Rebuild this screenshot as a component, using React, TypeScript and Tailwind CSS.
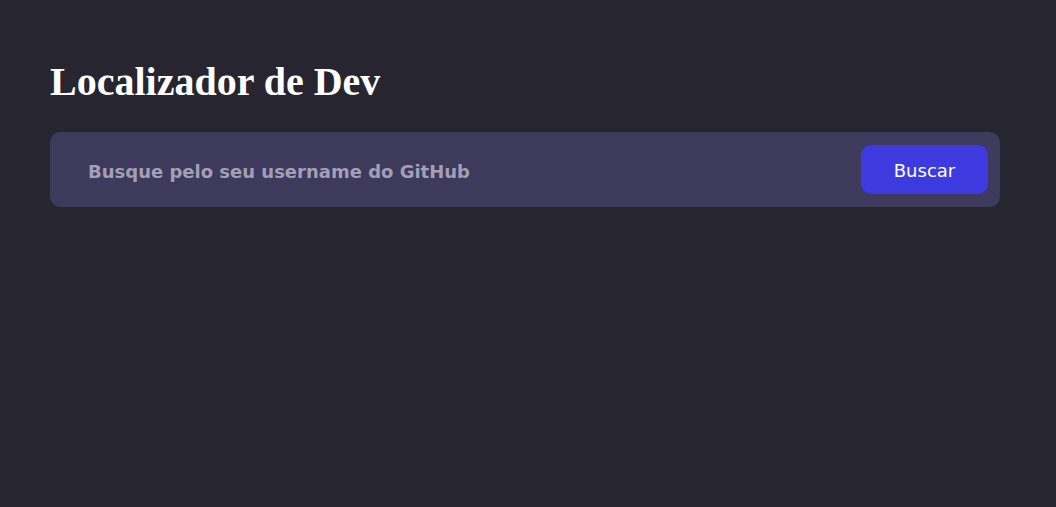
export default function App() {
  return (
    <div className="min-h-[507px] w-full bg-[#262530] px-[50px] pt-[60px]">
      <h1 className="font-['Liberation_Serif',serif] text-[40px] font-bold leading-[44px] text-white">
        Localizador de Dev
      </h1>
      <div className="mt-[28px] flex h-[75px] w-[950px] items-center rounded-[10px] bg-[#3e3a5c] pl-[38px] pr-[12px]">
        <input
          className="flex-1 bg-transparent pt-[3px] font-['DejaVu_Sans',sans-serif] text-[18px] font-bold text-white outline-none placeholder:text-[#a29fb7]"
          placeholder="Busque pelo seu username do GitHub"
        />
        <button className="h-[49px] w-[127px] rounded-[10px] bg-[#3d3ae0] pt-[2px] font-['DejaVu_Sans',sans-serif] text-[18px] text-white">
          Buscar
        </button>
      </div>
    </div>
  );
}
